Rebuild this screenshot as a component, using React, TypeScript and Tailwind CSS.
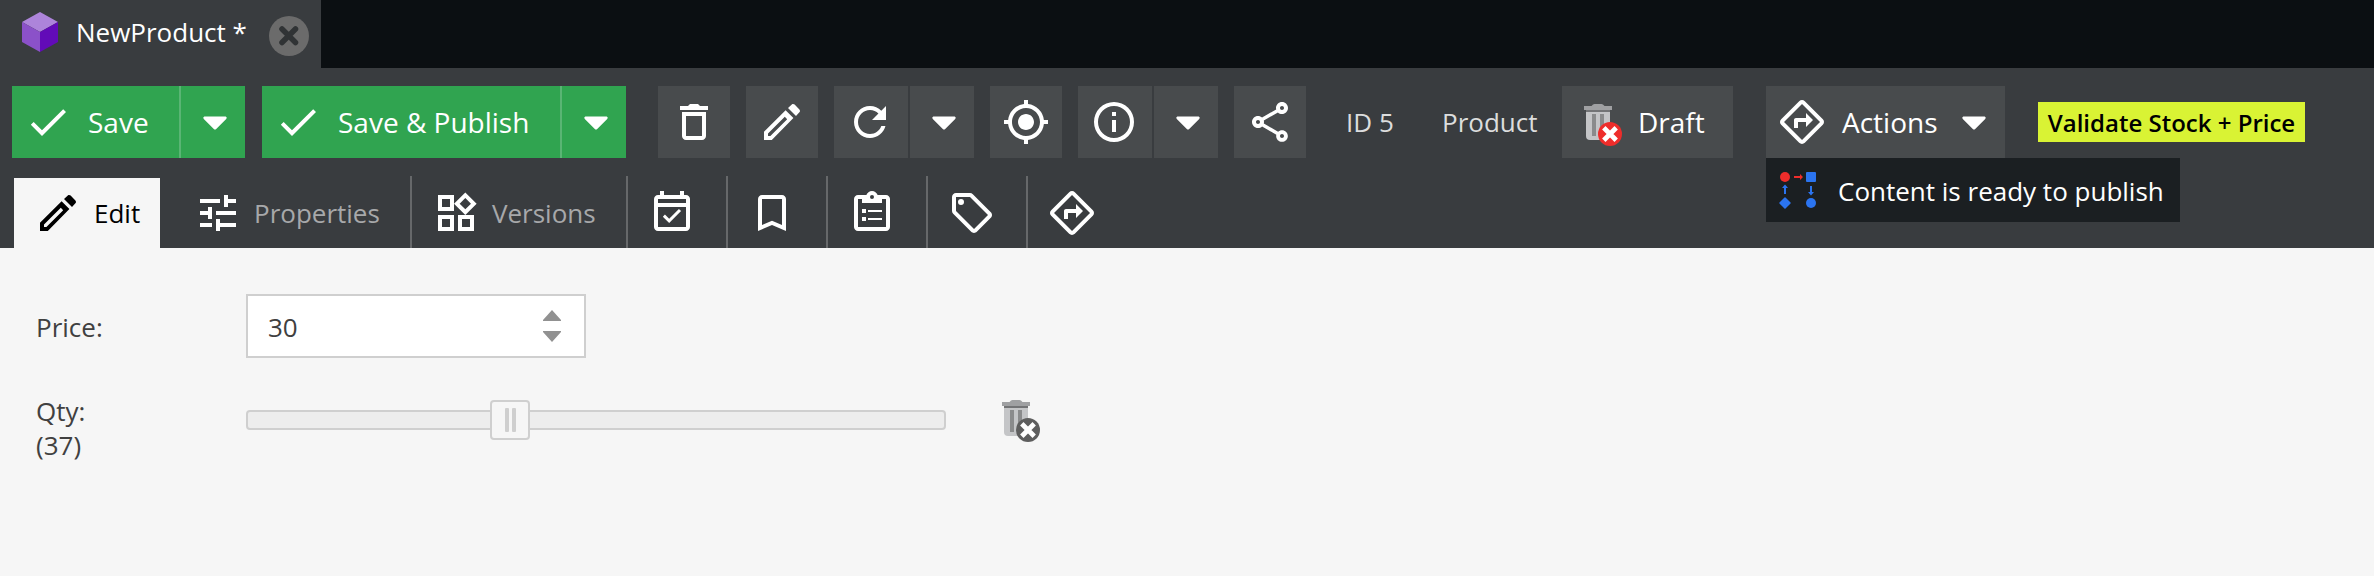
import React from "react";

const paths = {
  check: "M9 16.17L4.83 12l-1.42 1.41L9 19 21 7l-1.41-1.41z",
  trash: "M5 4h4l1-1h4l1 1h4v2H5zM6 7h12v12c0 1.1-.9 2-2 2H8c-1.1 0-2-.9-2-2zM8 9v10h8V9z",
  pencil: "M3 16.9L13.8 6.1l3.9 3.9L6.9 21H3zM5 17.8V19h1.2l8.4-8.4-1.2-1.2zM15 5l1.9-1.8c.5-.4 1-.3 1.4.1l2.4 2.4c.4.4.4 1 0 1.400L19 9z",
  refresh: "M17.65 6.35C16.2 4.9 14.21 4 12 4c-4.42 0-7.99 3.58-7.99 8s3.57 8 7.99 8c3.73 0 6.84-2.55 7.73-6h-2.08c-.82 2.33-3.04 4-5.65 4-3.31 0-6-2.69-6-6s2.69-6 6-6c1.66 0 3.14.69 4.22 1.78L13 11h7V4l-2.35 2.35z",
  target: "M12 8c-2.21 0-4 1.79-4 4s1.79 4 4 4 4-1.79 4-4-1.79-4-4-4zm8.94 3A8.994 8.994 0 0013 3.06V1h-2v2.06A8.994 8.994 0 003.06 11H1v2h2.06A8.994 8.994 0 0011 20.94V23h2v-2.06A8.994 8.994 0 0020.94 13H23v-2h-2.06zM12 19c-3.87 0-7-3.13-7-7s3.13-7 7-7 7 3.13 7 7-3.13 7-7 7z",
  info: "M11 7h2v2h-2zm0 4h2v6h-2zM12 2a10 10 0 100 20 10 10 0 000-20zm0 18a8 8 0 110-16 8 8 0 010 16z",
  share: "M18 16.08c-.76 0-1.44.3-1.96.77L8.91 12.7c.05-.23.09-.46.09-.7s-.04-.47-.09-.7l7.05-4.11c.54.5 1.25.81 2.04.81 1.66 0 3-1.34 3-3s-1.34-3-3-3-3 1.34-3 3c0 .24.04.47.09.7L8.04 9.81C7.5 9.31 6.79 9 6 9c-1.66 0-3 1.34-3 3s1.34 3 3 3c.79 0 1.5-.31 2.04-.81l7.12 4.16c-.05.21-.08.43-.08.65 0 1.61 1.31 2.92 2.92 2.92s2.92-1.31 2.92-2.92-1.31-2.92-2.92-2.92zM18 4c.55 0 1 .45 1 1s-.45 1-1 1-1-.45-1-1 .45-1 1-1zM6 13c-.55 0-1-.45-1-1s.45-1 1-1 1 .45 1 1-.45 1-1 1zm12 7c-.55 0-1-.45-1-1s.45-1 1-1 1 .45 1 1-.45 1-1 1z",
  directions: "M22.43 10.59l-9.01-9.01c-.75-.75-2.07-.76-2.83 0l-9 9c-.78.78-.78 2.04 0 2.82l9 9c.39.39.9.58 1.41.58.51 0 1.02-.19 1.41-.58l8.99-8.99c.79-.76.8-2.02.03-2.82zm-10.42 10.4l-9-9 9-9 9 9-9 9zM8 11v4h2v-3h4v2.5l3.5-3.5L14 7.5V10H9c-.55 0-1 .45-1 1z",
  tune: "M3 17v2h6v-2H3zM3 5v2h10V5H3zm10 16v-2h8v-2h-8v-2h-2v6h2zM7 9v2H3v2h4v2h2V9H7zm14 4v-2H11v2h10zm-6-4h2V7h4V5h-4V3h-2v6z",
  widgets: "M16.66 4.52l2.83 2.83-2.83 2.83-2.83-2.83 2.83-2.83M9 5v4H5V5h4m10 10v4h-4v-4h4M9 15v4H5v-4h4m7.66-13.31L11 7.34 16.66 13l5.66-5.66-5.66-5.65zM11 3H3v8h8V3zm10 10h-8v8h8v-8zm-10 0H3v8h8v-8z",
  calendar: "M16.53 11.06L15.47 10l-4.88 4.88-2.12-2.12-1.06 1.06L10.59 17l5.94-5.94zM19 3h-1V1h-2v2H8V1H6v2H5c-1.11 0-1.99.9-1.99 2L3 19c0 1.1.89 2 2 2h14c1.1 0 2-.9 2-2V5c0-1.1-.9-2-2-2zm0 16H5V9h14v10zM19 7H5V5h14v2z",
  bookmark: "M17 3H7c-1.1 0-1.99.9-1.99 2L5 21l7-3 7 3V5c0-1.1-.9-2-2-2zm0 15l-5-2.18L7 18V5h10v13z",
  clipboard: "M19 3h-4.18C14.4 1.84 13.3 1 12 1s-2.4.84-2.82 2H5c-1.1 0-2 .9-2 2v14c0 1.1.9 2 2 2h14c1.1 0 2-.9 2-2V5c0-1.1-.9-2-2-2zm-7 0a1 1 0 110 2 1 1 0 010-2zm7 16H5V5h2v2h10V5h2zM7 10h2v2H7zM7 14h2v2H7zM10 10.5h7v1h-7zM10 14.5h7v1h-7z",
  tag: "M21.41 11.58l-9-9C12.05 2.22 11.55 2 11 2H4c-1.1 0-2 .9-2 2v7c0 .55.22 1.05.59 1.42l9 9c.36.36.86.58 1.41.58s1.05-.22 1.41-.59l7-7c.37-.36.59-.86.59-1.41s-.23-1.06-.59-1.42zM13 20.01L4 11V4h7v-.01l9 9-7 7.02zM6.5 5a1.5 1.5 0 100 3 1.5 1.5 0 000-3z",
};

type IconName = keyof typeof paths;

function Icon({ name }: { name: IconName }) {
  return (
    <svg viewBox="0 0 24 24" className="size-12 shrink-0 fill-current">
      <path d={paths[name]} fillRule={name === "share" || name === "directions" ? "nonzero" : "evenodd"} />
    </svg>
  );
}

function Caret() {
  return (
    <svg viewBox="0 0 24 14" className="h-3.5 w-6 shrink-0 fill-current">
      <path d="M2 .5h20c1.600 0 2.200 1.300 1.200 2.400L13.200 12.900c-.7.7-1.700.7-2.400 0L.8 2.900C-.2 1.800.4.5 2 .5z" />
    </svg>
  );
}

function TrashDelete({ badge }: { badge: "red" | "gray" }) {
  return (
    <svg viewBox="0 0 48 48" className="size-12 shrink-0">
      <path d="M12 12h24v26a4 4 0 0 1-4 4H16a4 4 0 0 1-4-4z" fill="#c4c5c7" />
      <path d="M12 12h24v2H12z" fill="#737476" />
      <path d="M10 8h7.500q1.500-2 3-2h7q1.500 0 3 2H38v4H10z" fill="#9fa0a2" />
      <path d="M18 16h4v22h-4zM26 16h4v22h-4z" fill="#8a8b8c" />
      <circle cx="36" cy="36" r="12" fill={badge === "red" ? "#ee2d2b" : "#5e5e5e"} />
      <path d="M31.500 31.500l9 9M40.500 31.500l-9 9" stroke="#fff" strokeWidth="4.800" strokeLinecap="square" />
    </svg>
  );
}

function Split({ label, width }: { label: string; width: string }) {
  return (
    <div className={`flex h-[72px] bg-[#30a450] ${width}`}>
      <button className="flex flex-1 items-center pl-3 text-[28px]">
        <Icon name="check" />
        <span className="ml-4 whitespace-nowrap">{label}</span>
      </button>
      <button className="flex w-[66px] items-center justify-center border-l-2 border-[#5ab574] pt-0.5 pl-[3px]">
        <Caret />
      </button>
    </div>
  );
}

function Tool({ name, menu }: { name: IconName; menu?: boolean }) {
  return (
    <div className="flex h-[72px] gap-0.5">
      <button className={`flex items-center bg-[#484b4d] pl-3 ${menu ? "w-[74px]" : "w-[72px]"}`}>
        <Icon name={name} />
      </button>
      {menu && (
        <button className="flex w-16 items-center justify-center bg-[#484b4d] pt-0.5 pr-px pl-[5px]">
          <Caret />
        </button>
      )}
    </div>
  );
}

function Tab({ name, label, width }: { name: IconName; label?: string; width: string }) {
  return (
    <div className={`flex h-[72px] shrink-0 items-center pt-0.5 pl-5 ${width}`}>
      <Icon name={name} />
      {label && <span className="ml-3 text-[26px] text-[#a7a8aa]">{label}</span>}
    </div>
  );
}

export default function App() {
  return (
    <div className="flex h-[576px] w-[2374px] flex-col overflow-hidden bg-[#f6f6f6] font-['Open_Sans',sans-serif] text-white">
      <header className="flex h-[68px] bg-[#0b0f12]">
        <div className="flex w-[321px] bg-[#393c3f]">
          <svg viewBox="0 0 36 40" className="mt-3 ml-[22px] h-10 w-9">
            <path d="M18 0l18 10-18 10L0 10z" fill="#ad84da" />
            <path d="M0 10l18 10v20L0 30z" fill="#8b51c9" />
            <path d="M36 10L18 20v20l18-10z" fill="#620bb8" />
          </svg>
          <span className="mt-3.5 ml-[18px] w-[176px] text-[26px] leading-9 whitespace-nowrap">NewProduct *</span>
          <svg viewBox="0 0 40 40" className="mt-4 ml-[17px] size-10 shrink-0">
            <circle cx="20" cy="20" r="20" fill="#6b6b6b" />
            <path d="M13 13l13.500 13.500M26.500 13L13 26.500" stroke="#303335" strokeWidth="5.500" strokeLinecap="round" />
          </svg>
        </div>
      </header>
      <section className="h-[180px] bg-[#393c3f]">
        <div className="flex items-start pt-[18px] pl-3">
          <Split label="Save" width="w-[233px]" />
          <div className="ml-[17px]"><Split label="Save & Publish" width="w-[364px]" /></div>
          <div className="ml-8 flex gap-4">
            <Tool name="trash" />
            <Tool name="pencil" />
            <Tool name="refresh" menu />
            <Tool name="target" />
            <Tool name="info" menu />
            <Tool name="share" />
          </div>
          <div className="flex h-[72px] w-64 items-center text-[26px] text-[#dcdddd]">
            <span className="ml-10 w-[96px] whitespace-nowrap">ID 5</span>
            <span>Product</span>
          </div>
          <button className="flex h-[72px] w-[171px] items-center bg-[#484b4d] pl-3 text-[28px]">
            <TrashDelete badge="red" />
            <span className="ml-4">Draft</span>
          </button>
          <div className="relative ml-[33px]">
            <button className="flex h-[72px] w-[239px] items-center bg-[#484b4d] pl-3 text-[28px]">
              <Icon name="directions" />
              <span className="ml-4 w-[97px] text-left">Actions</span>
              <span className="mt-0.5 ml-[23px]"><Caret /></span>
            </button>
            <div className="absolute top-[72px] left-0 flex h-16 w-[414px] items-center bg-[#1b1f22] text-[26px]">
              <svg viewBox="0 0 38 38" className="ml-3 h-[38px] w-[38px] shrink-0">
                <circle cx="7" cy="6" r="5" fill="#ee2d2b" />
                <path d="M16 5h6V3l3 3-3 3V7h-6z" fill="#ee2d2b" />
                <rect x="28" y="1" width="10" height="10" rx="1" fill="#2b74f0" />
                <path d="M7 13.500l3 3.500H8v6H6v-6H4zM32 15h2v6h2l-3 3.500-3-3.500h2z" fill="#2b74f0" />
                <path d="M7 27l5 5-5 5-5-5z" fill="#2b74f0" stroke="#2b74f0" strokeWidth="1.500" strokeLinejoin="round" />
                <circle cx="33" cy="32" r="5" fill="#2b74f0" />
              </svg>
              <span className="ml-[22px] pt-0.5 whitespace-nowrap">Content is ready to publish</span>
            </div>
          </div>
          <div className="mt-4 ml-[33px] flex h-10 w-[267px] items-center justify-center bg-[#d9f334] pt-0.5 text-[24px] font-semibold whitespace-nowrap text-black">
            Validate Stock + Price
          </div>
        </div>
        <nav className="mt-[18px] flex h-[72px] pl-3.5">
          <div className="mt-0.5 flex h-[70px] w-[146px] items-center bg-[#f6f6f6] pl-5 text-[26px] text-black">
            <Icon name="pencil" />
            <span className="ml-3">Edit</span>
          </div>
          <div className="ml-3.5 flex divide-x-2 divide-[#66686a]">
            <Tab name="tune" label="Properties" width="w-[238px]" />
            <Tab name="widgets" label="Versions" width="w-[216px]" />
            <Tab name="calendar" width="w-[100px]" />
            <Tab name="bookmark" width="w-[100px]" />
            <Tab name="clipboard" width="w-[100px]" />
            <Tab name="tag" width="w-[100px]" />
            <Tab name="directions" width="w-[100px]" />
          </div>
        </nav>
      </section>
      <main className="flex flex-col text-[26px] leading-[34px] text-[#404040]">
        <div className="mt-[46px] flex h-16 items-center pl-9">
          <label className="w-[210px] pt-0.5">Price:</label>
          <div className="flex h-16 w-[340px] items-center justify-between border-2 border-[#cfcfcf] bg-white pr-[22px] pl-5">
            <span className="pt-0.5">30</span>
            <svg viewBox="0 0 20 32" className="h-8 w-5 fill-[#919191]">
              <path d="M10 0l9 10v1H1v-1zM1 21h18v1l-9 10L1 22z" />
            </svg>
          </div>
        </div>
        <div className="mt-9 flex pl-9">
          <label className="w-[210px]">Qty:<br />(37)</label>
          <div className="relative mt-4 h-5 w-[700px] rounded border-2 border-[#cfcfcf] bg-[#ededed]">
            <div className="absolute -top-3 left-[242px] flex h-10 w-10 items-center justify-center gap-[3px] rounded border-2 border-[#cfcfcf] bg-[#f6f6f6]">
              <i className="h-6 w-1 rounded-[1px] bg-[#cfcfcf]" />
              <i className="h-6 w-1 rounded-[1px] bg-[#cfcfcf]" />
            </div>
          </div>
          <div className="ml-[46px]"><TrashDelete badge="gray" /></div>
        </div>
      </main>
    </div>
  );
}
